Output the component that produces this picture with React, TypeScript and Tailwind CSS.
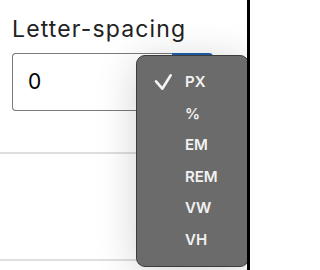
const units = ["PX", "%", "EM", "REM", "VW", "VH"];

function Check() {
  return (
    <svg width="20" height="18" viewBox="0 0 20 18" fill="none" className="block">
      <path
        d="M2 8.3 L8.3 15.7 L16.7 2.3"
        stroke="#f4f4f4"
        strokeWidth="2.6"
        strokeLinecap="round"
        strokeLinejoin="round"
      />
    </svg>
  );
}

export default function App() {
  return (
    <div className="relative w-[250px] h-[270px] overflow-hidden bg-white border-r-[3px] border-black font-['Inter',sans-serif]">
      <div className="flex flex-col">
        <div className="pl-[12px] pt-[15px] text-[23px] leading-[28px] text-[#222] tracking-[0.05em]">
          Letter-spacing
        </div>
        <div className="mt-[10px] ml-[12px] flex h-[58px] w-[201px]">
          <div className="flex flex-1 items-center rounded-l-[4px] border border-r-0 border-[#7a7a7a] pl-[15px] text-[21px] text-black">
            0
          </div>
          <div className="w-[41px] rounded-r-[4px] border-2 border-[#1f5fae] bg-[#f3f3f3]" />
        </div>
        <div className="mt-[41px] h-[2px] bg-[#dedede]" />
        <div className="mt-[105px] h-[2px] bg-[#dedede]" />
      </div>

      <div className="absolute left-[136px] top-[55px] w-[113px] h-[212px] rounded-[9px] border border-[#3c3c3c] bg-[#6b6b6b] pt-[10.5px] shadow-[0_6px_40px_rgba(0,0,0,0.18)]">
        {units.map((u, i) => (
          <div key={u} className="flex items-center h-[31.6px]">
            <div className="w-[48px] pl-[17px]">{i === 0 && <Check />}</div>
            <span className="text-[15px] font-semibold text-[#f2f2f2]">{u}</span>
          </div>
        ))}
      </div>
    </div>
  );
}
